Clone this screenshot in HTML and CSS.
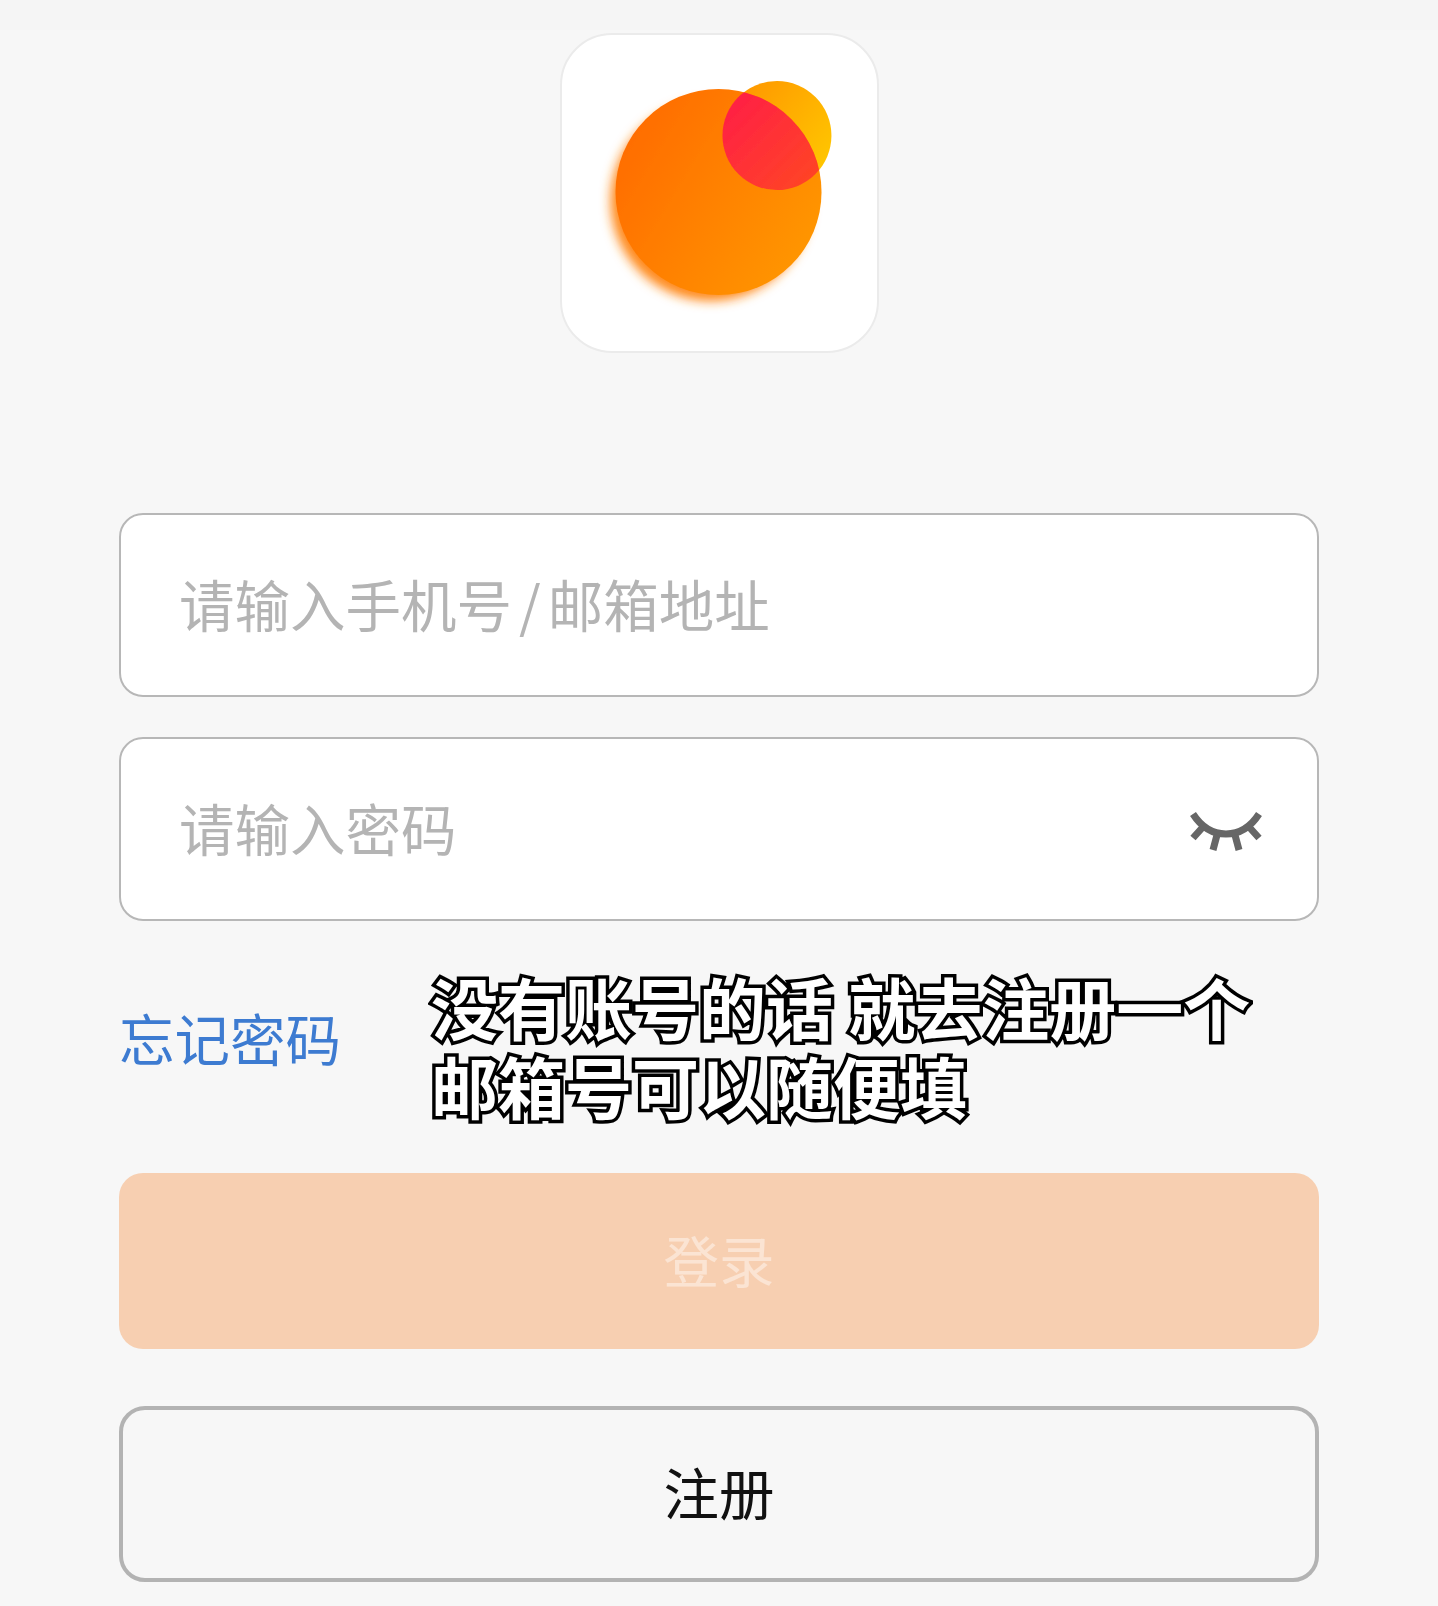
FILE: index.html
```html
<!DOCTYPE html>
<html lang="zh-CN">
<head>
<meta charset="utf-8">
<title>登录</title>
<link rel="stylesheet" href="styles.css">
</head>
<body>
<main class="page">
  <div class="logo">
    <svg class="logo-art" viewBox="0 0 318 318" width="318" height="318">
      <defs>
        <linearGradient id="big" x1="0" y1="0" x2="1" y2="0.6">
          <stop offset="0" stop-color="#ff6600"/>
          <stop offset="0.55" stop-color="#ff8000"/>
          <stop offset="1" stop-color="#ff9400"/>
        </linearGradient>
        <linearGradient id="small" x1="0" y1="0" x2="1" y2="0.8">
          <stop offset="0" stop-color="#ff9000"/>
          <stop offset="1" stop-color="#ffc800"/>
        </linearGradient>
        <linearGradient id="mix" x1="0" y1="0" x2="1" y2="1">
          <stop offset="0" stop-color="#ff1a4a"/>
          <stop offset="1" stop-color="#ff4a20"/>
        </linearGradient>
        <filter id="soft" x="-20%" y="-20%" width="140%" height="140%">
          <feGaussianBlur stdDeviation="5.5"/>
        </filter>
        <filter id="edge" x="-5%" y="-5%" width="110%" height="110%">
          <feGaussianBlur stdDeviation="0.8"/>
        </filter>
        <clipPath id="bigclip"><circle cx="158" cy="158" r="104"/></clipPath>
      </defs>
      <circle cx="217" cy="101" r="55" fill="url(#small)" filter="url(#edge)"/>
      <circle cx="150" cy="167" r="101" fill="#ff8a1a" filter="url(#soft)"/>
      <circle cx="158" cy="158" r="104" fill="url(#big)" filter="url(#edge)"/>
      <circle cx="217" cy="101" r="55" fill="url(#mix)" clip-path="url(#bigclip)" filter="url(#edge)"/>
    </svg>
  </div>

  <form class="form">
    <div class="field"><span class="placeholder">请输入手机号<span class="slash">/</span>邮箱地址</span></div>
    <div class="field field-password">
      <span class="placeholder">请输入密码</span>
      <svg class="eye" viewBox="0 0 72 42" width="72" height="42">
        <path d="M3 3 C12 17 23 23 36 23 C49 23 60 17 69 3" fill="none" stroke="#666" stroke-width="7"/>
        <path d="M12 17 L3 27 M27 24 L23 39 M45 24 L49 39 M60 17 L69 27" fill="none" stroke="#666" stroke-width="7"/>
      </svg>
    </div>
    <div class="links">
      <a class="forgot">忘记密码</a>
      <div class="caption">没有账号的话 就去注册一个<br>邮箱号可以随便填</div>
    </div>
    <div class="btn btn-login"><span class="btn-label">登录</span></div>
    <div class="btn btn-register">注册</div>
  </form>
</main>
</body>
</html>
```

FILE: styles.css
```css
* { box-sizing: border-box; }
html, body { margin: 0; }
body {
  background: #f7f7f7;
  font-family: "Noto Sans CJK SC", "Noto Sans", sans-serif;
  font-weight: 400;
}
.page {
  width: 1438px;
  height: 1606px;
  padding-top: 33px;
  background: linear-gradient(#f5f5f5 0, #f5f5f5 30px, #f7f7f7 30px);
  display: flex;
  flex-direction: column;
  align-items: center;
}
.logo {
  width: 319px;
  height: 320px;
  background: #fff;
  border: 2px solid #ebebeb;
  border-radius: 52px;
  display: flex;
  align-items: center;
  justify-content: center;
}
.logo-art { display: block; }
.form {
  width: 1200px;
  align-self: flex-start;
  margin-left: 119px;
  margin-top: 160px;
  display: flex;
  flex-direction: column;
}
.field {
  height: 184px;
  margin-bottom: 40px;
  padding: 0 55px 0 58px;
  background: #fff;
  border: 2px solid #b7b7b7;
  border-radius: 24px;
  display: flex;
  align-items: center;
  justify-content: space-between;
}
.field + .links { margin-top: -40px; }
.placeholder {
  font-size: 55.5px;
  line-height: 1;
  color: #b4b4b4;
  position: relative;
  top: -1px;
}
.slash { margin: 0 7px; }
.eye { display: block; flex: none; margin-top: 6px; }
.links {
  height: 252px;
  position: relative;
  display: flex;
  align-items: center;
}
.forgot {
  font-size: 55.5px;
  line-height: 1;
  color: #3d7bd1;
  margin-bottom: 18px;
}
.caption {
  position: absolute;
  left: 312px;
  top: 45px;
  font-size: 67px;
  line-height: 79px;
  font-weight: 700;
  color: #fff;
  white-space: nowrap;
  -webkit-text-stroke: 7px #000;
  paint-order: stroke fill;
  filter: blur(0.7px);
}
.btn {
  display: flex;
  align-items: center;
  justify-content: center;
  font-size: 55.5px;
  line-height: 1;
}
.btn-login {
  height: 176px;
  background: #f7cfb1;
  color: #fbe4d3;
  border-radius: 24px;
}
.btn-label {
  position: relative;
  top: -1px;
}
.btn-register {
  height: 176px;
  margin-top: 57px;
  padding-bottom: 4px;
  color: #111;
  border: 4px solid #b3b3b3;
  border-radius: 26px;
}
```
